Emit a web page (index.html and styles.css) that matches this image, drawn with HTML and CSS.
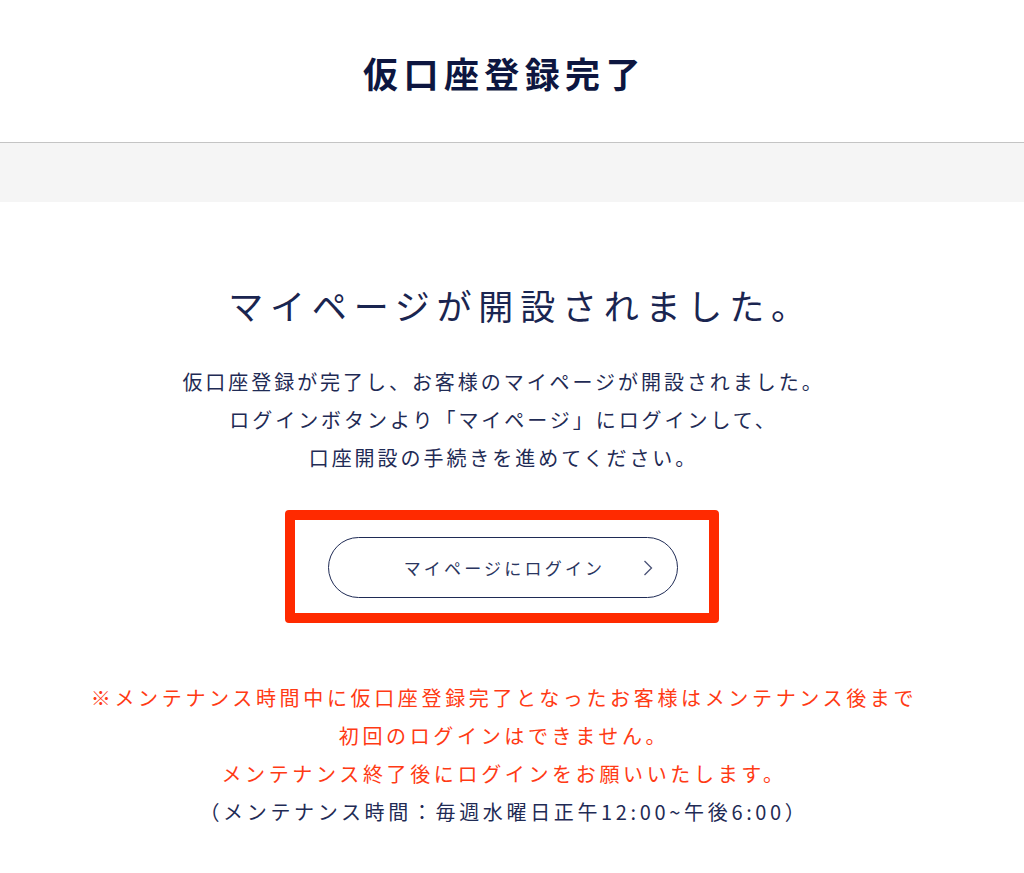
FILE: index.html
```html
<!DOCTYPE html>
<html lang="ja">
<head>
<meta charset="utf-8">
<title>仮口座登録完了</title>
<link rel="stylesheet" href="styles.css">
</head>
<body>
<header class="page-header">
  <h1 class="page-title">仮口座登録完了</h1>
</header>
<div class="band"></div>
<main class="content">
  <h2 class="lead">マイページが開設されました。</h2>
  <p class="desc">仮口座登録が完了し、お客様のマイページが開設されました。<br>ログインボタンより「マイページ」にログインして、<br>口座開設の手続きを進めてください。</p>
  <div class="highlight">
    <a class="login-btn" href="#">
      <span class="login-label">マイページにログイン</span>
      <svg class="chev" width="10" height="16" viewBox="0 0 10 16"><path d="M1.5 1 L8.5 8 L1.5 15" fill="none" stroke="#4a5276" stroke-width="1.3"/></svg>
    </a>
  </div>
  <p class="notes"><span class="warn">※メンテナンス時間中に仮口座登録完了となったお客様はメンテナンス後まで<br>初回のログインはできません。<br>メンテナンス終了後にログインをお願いいたします。</span><br>（メンテナンス時間：毎週水曜日正午12:00~午後6:00）</p>
</main>
</body>
</html>
```
FILE: styles.css
```css
* { box-sizing: border-box; }
html, body { margin: 0; padding: 0; background: #fff; }
body {
  font-family: "Noto Sans CJK JP", "Noto Sans", sans-serif;
  color: #1f2b55;
}
.page-header {
  height: 143px;
  border-bottom: 1px solid #c4c4c4;
  display: flex;
  align-items: center;
  justify-content: center;
  padding-right: 20px;
}
.page-title {
  margin: 0;
  font-size: 35px;
  font-weight: 700;
  letter-spacing: 5.4px;
  color: #0d1640;
  line-height: 1;
  padding-left: 5px;
  padding-top: 2px;
}
.band {
  height: 59px;
  background: #f5f5f5;
}
.content {
  display: flex;
  flex-direction: column;
  align-items: center;
  text-align: center;
  padding-right: 20px;
}
.lead {
  margin: 78px 0 0;
  font-size: 35px;
  font-weight: 400;
  letter-spacing: 6.8px;
  line-height: 50px;
  color: #1a2550;
  padding-left: 37px;
}
.desc {
  margin: 33px 0 0;
  font-size: 20px;
  letter-spacing: 2.95px;
  line-height: 38px;
  padding-left: 3px;
}
.highlight {
  margin-top: 33px;
  width: 434px;
  height: 113px;
  border: 10px solid #ff2a00;
  border-radius: 4px;
  padding: 17px 0 0 33px;
}
.login-btn {
  position: relative;
  display: flex;
  align-items: center;
  justify-content: center;
  width: 350px;
  height: 61px;
  border: 1.5px solid #1f2b55;
  border-radius: 31px;
  text-decoration: none;
  color: #2a3560;
}
.login-label {
  font-size: 17px;
  letter-spacing: 3.2px;
  padding-left: 3px;
}
.chev {
  position: absolute;
  right: 24px;
  top: 22px;
}
.notes {
  margin: 56px 0 0;
  font-size: 20px;
  letter-spacing: 3.65px;
  line-height: 38px;
  padding-left: 4px;
}
.warn { color: #ff3a14; }
```
